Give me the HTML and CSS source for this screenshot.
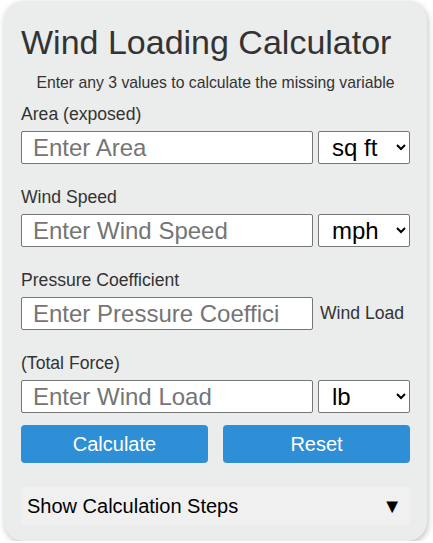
FILE: index.html
```html
<!DOCTYPE html>
<html lang="en">

<head>
  <meta charset="UTF-8">
  <meta name="viewport" content="width=device-width, initial-scale=1.0">
  <title>Wind Loading Calculator</title>
  <link rel="stylesheet" href="styles.css">
</head>

<body>

  <div class="calculator">
    <h1>Wind Loading Calculator</h1>
    <p class="subtitle">Enter any 3 values to calculate the missing variable</p>

    <div class="field">
      <label for="area">Area (exposed)</label>
      <div class="input-group">
        <input type="text" id="area" placeholder="Enter Area">
        <select id="areaUnit">
          <option>sq ft</option>
          <option>sq m</option>
        </select>
      </div>
    </div>

    <div class="field">
      <label for="speed">Wind Speed</label>
      <div class="input-group">
        <input type="text" id="speed" placeholder="Enter Wind Speed">
        <select id="speedUnit">
          <option>mph</option>
          <option>km/h</option>
        </select>
      </div>
    </div>

    <div class="field">
      <label for="coef">Pressure Coefficient</label>
      <div class="input-group">
        <input type="text" id="coef" placeholder="Enter Pressure Coefficient">
        <span class="side-label">Wind Load</span>
      </div>
    </div>

    <div class="field">
      <label for="load">(Total Force)</label>
      <div class="input-group">
        <input type="text" id="load" placeholder="Enter Wind Load">
        <select id="loadUnit">
          <option>lb</option>
          <option>N</option>
        </select>
      </div>
    </div>

    <div class="buttons">
      <button onclick="calculate()">Calculate</button>
      <button onclick="resetAll()">Reset</button>
    </div>

    <div class="steps">
      <span>Show Calculation Steps</span>
      <span class="arrow">&#9660;</span>
    </div>
  </div>

  <script>
    function calculate() {
      const a = parseFloat(document.getElementById('area').value);
      const v = parseFloat(document.getElementById('speed').value);
      const c = parseFloat(document.getElementById('coef').value);
      const f = parseFloat(document.getElementById('load').value);
      if (!isNaN(a) && !isNaN(v) && !isNaN(c)) {
        document.getElementById('load').value = (0.00256 * v * v * a * c).toFixed(2);
      } else if (!isNaN(f) && !isNaN(v) && !isNaN(c)) {
        document.getElementById('area').value = (f / (0.00256 * v * v * c)).toFixed(2);
      }
    }

    function resetAll() {
      ['area', 'speed', 'coef', 'load'].forEach(function (id) {
        document.getElementById(id).value = '';
      });
    }
  </script>

</body>

</html>
```

FILE: styles.css
```css
body {
  font-family: "Liberation Sans", Arial, sans-serif;
  margin: 0;
  padding: 1px 6px 0 4px;
  background-color: #ffffff;
  color: #333333;
}

.calculator {
  background-color: #ebecec;
  border-radius: 20px;
  box-shadow: 1px 2px 6px rgba(0, 0, 0, 0.25);
  padding: 22px 17px 16px 17px;
}

h1 {
  font-size: 34px;
  font-weight: normal;
  line-height: 39px;
  margin: 0 0 12px 0;
  color: #333333;
}

.subtitle {
  text-align: center;
  font-size: 15.75px;
  line-height: 18px;
  margin: 0 0 12px 0;
}

.field {
  margin-bottom: 23px;
}

label {
  display: block;
  font-size: 17.6px;
  line-height: 20px;
  margin-bottom: 7px;
}

.input-group {
  display: flex;
  align-items: center;
  gap: 5px;
}

input {
  width: 292px;
  height: 33px;
  box-sizing: border-box;
  border: 1px solid #767676;
  border-radius: 2px;
  padding: 0 33px 0 11px;
  font-family: inherit;
  font-size: 24px;
  background: #ffffff;
}

input::placeholder {
  color: #757575;
}

select {
  width: 92px;
  height: 33px;
  box-sizing: border-box;
  border: 1px solid #767676;
  border-radius: 2px;
  padding: 0 4px 0 9px;
  font-family: inherit;
  font-size: 24px;
  background: #ffffff;
  color: #000000;
}

.side-label {
  font-size: 17.6px;
  padding-left: 2px;
}

.buttons {
  display: flex;
  gap: 15px;
  margin-top: -11px;
}

button {
  flex: 1;
  height: 38px;
  background-color: #2e8fd6;
  color: #ffffff;
  border: none;
  border-radius: 4px;
  font-family: inherit;
  font-size: 20px;
  cursor: pointer;
}

button:hover {
  background-color: #2378b8;
}

.steps {
  display: flex;
  justify-content: space-between;
  align-items: center;
  margin-top: 24px;
  height: 38px;
  padding: 0 8px 0 6px;
  background-color: #f0f0f0;
  border-radius: 4px;
  font-size: 20px;
  color: #000000;
}
```
